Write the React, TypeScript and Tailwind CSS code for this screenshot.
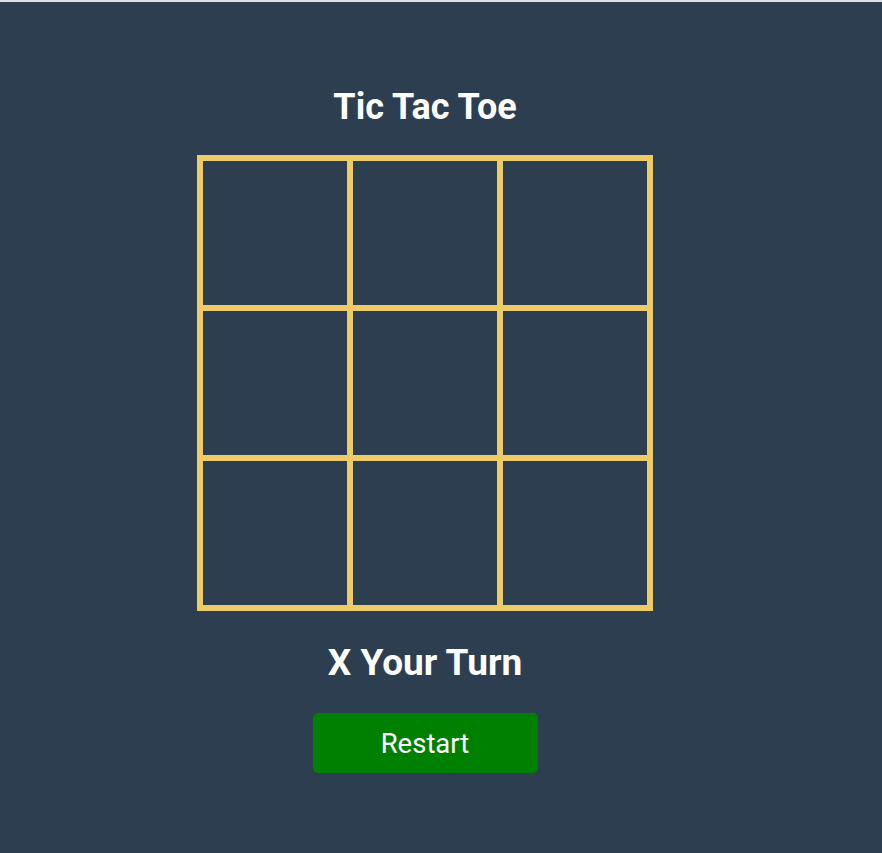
import React, { useState } from 'react';

type Cell = 'X' | 'O' | null;

export default function App() {
  const [board, setBoard] = useState<Cell[]>(Array(9).fill(null));
  const [turn, setTurn] = useState<'X' | 'O'>('X');

  const handleClick = (i: number) => {
    if (board[i]) return;
    const next = [...board];
    next[i] = turn;
    setBoard(next);
    setTurn(turn === 'X' ? 'O' : 'X');
  };

  const handleRestart = () => {
    setBoard(Array(9).fill(null));
    setTurn('X');
  };

  return (
    <div className="min-h-screen bg-[#2d3e50] border-t-2 border-[#dfe3e8] font-['Roboto',sans-serif] text-white">
      <div className="w-[850px] flex flex-col items-center pt-[85px]">
        <h1 className="text-[36px] leading-[40px] font-bold">Tic Tac Toe</h1>

        <div className="mt-[28px] grid grid-cols-3 border-[3px] border-[#edcb67]">
          {board.map((cell, i) => (
            <button
              key={i}
              onClick={() => handleClick(i)}
              className="w-[150px] h-[150px] border-[3px] border-[#edcb67] text-6xl font-bold text-white"
            >
              {cell}
            </button>
          ))}
        </div>

        <h2 className="mt-[30px] text-[37px] leading-[44px] font-bold">{turn} Your Turn</h2>

        <button
          onClick={handleRestart}
          className="mt-[28px] w-[225px] h-[60px] pt-[2px] bg-[#008000] rounded-[5px] text-[27.5px] text-white"
        >
          Restart
        </button>
      </div>
    </div>
  );
}
